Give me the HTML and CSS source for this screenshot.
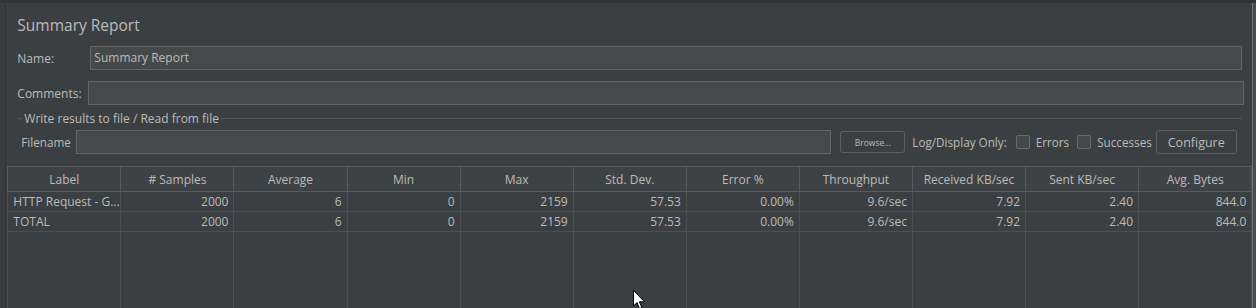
FILE: index.html
```html
<!DOCTYPE html>
<html lang="en">
<head>
    <meta charset="UTF-8">
    <title>Summary Report</title>
    <link rel="stylesheet" href="styles.css">
</head>
<body>
    <div class="frame">
        <div class="gutter"></div>

        <div class="panel">
            <h1 class="title">Summary Report</h1>

            <div class="field name-field">
                <span class="field-label">Name:</span>
                <div class="text-box">Summary Report</div>
            </div>

            <div class="field comments-field">
                <span class="field-label">Comments:</span>
                <div class="text-box"></div>
            </div>

            <div class="file-box">
                <div class="file-title">
                    <span class="dash"></span>
                    <span class="file-title-text">Write results to file / Read from file</span>
                    <span class="rule"></span>
                </div>
                <div class="file-row">
                    <span class="field-label">Filename</span>
                    <div class="text-box filename"></div>
                    <button class="btn small">Browse...</button>
                    <span class="log-label">Log/Display Only:</span>
                    <label class="check"><span class="box"></span>Errors</label>
                    <label class="check"><span class="box"></span>Successes</label>
                    <button class="btn wide">Configure</button>
                </div>
            </div>

            <table class="results">
                <thead>
                    <tr>
                        <th>Label</th>
                        <th># Samples</th>
                        <th>Average</th>
                        <th>Min</th>
                        <th>Max</th>
                        <th>Std. Dev.</th>
                        <th>Error %</th>
                        <th>Throughput</th>
                        <th>Received KB/sec</th>
                        <th>Sent KB/sec</th>
                        <th>Avg. Bytes</th>
                    </tr>
                </thead>
                <tbody>
                    <tr>
                        <td class="name">HTTP Request - G...</td>
                        <td>2000</td><td>6</td><td>0</td><td>2159</td><td>57.53</td>
                        <td>0.00%</td><td>9.6/sec</td><td>7.92</td><td>2.40</td><td>844.0</td>
                    </tr>
                    <tr>
                        <td class="name">TOTAL</td>
                        <td>2000</td><td>6</td><td>0</td><td>2159</td><td>57.53</td>
                        <td>0.00%</td><td>9.6/sec</td><td>7.92</td><td>2.40</td><td>844.0</td>
                    </tr>
                    <tr class="filler">
                        <td></td><td></td><td></td><td></td><td></td><td></td>
                        <td></td><td></td><td></td><td></td><td></td>
                    </tr>
                </tbody>
            </table>
        </div>

        <div class="scroll-edge"></div>
    </div>

    <!-- mouse pointer over the table -->
    <svg class="pointer" width="13" height="20" viewBox="0 0 13 20">
        <path d="M0.5 0.5 L0.5 16 L4 12.5 L6.5 18.5 L8.8 17.5 L6.4 11.8 L11.5 11.8 Z" fill="#ffffff" stroke="#000000" stroke-width="1"/>
    </svg>
</body>
</html>
```

FILE: styles.css
```css
body { margin: 0; background: #3c3f41; font-family: "Open Sans", "Noto Sans", sans-serif; font-size: 12px; color: #bbbbbb; overflow: hidden; }
.frame { display: flex; height: 308px; border-top: 3px solid #313335; box-sizing: border-box; }
.gutter { width: 6px; background: #3a3d3f; border-right: 1px solid #2f3133; }
.panel { flex: 1; padding-left: 1px; }
.scroll-edge { width: 3px; background: #4a4d4f; border-left: 1px solid #6e7173; }

.title { margin: 0; padding: 11px 0 0 10px; height: 32px; font-size: 15.5px; font-weight: normal; line-height: 22px; color: #bbbbbb; }

.field { display: flex; align-items: center; height: 24px; padding-left: 10px; }
.comments-field { margin-top: 11px; }
.name-field .field-label { width: 73px; }
.comments-field .field-label { width: 71px; }
.name-field .text-box { width: 1152px; }
.comments-field .text-box { width: 1156px; }

.text-box { height: 24px; box-sizing: border-box; border: 1px solid #646464; background: #45494a; padding: 0 3px; line-height: 21px; }

.file-box { margin-top: 5px; padding-left: 12px; padding-right: 10px; }
.file-title { display: flex; align-items: center; height: 16px; white-space: nowrap; }
.dash { width: 3px; border-top: 1px solid #5b5e60; }
.file-title-text { padding: 0 2px; }
.rule { flex: 1; border-top: 1px solid #55585a; }

.file-row { display: flex; align-items: center; height: 24px; margin-top: 4px; padding-left: 2px; white-space: nowrap; font-size: 11.7px; }
.file-row .field-label { width: 55px; }
.filename { width: 755px; }

.btn { height: 22px; box-sizing: border-box; border: 1px solid #5e6060; border-radius: 3px; background: #3c3f41; color: #bbbbbb; font-family: inherit; font-size: 12px; padding: 0; }
.btn.small { width: 65px; margin-left: 9px; font-size: 8.5px; }
.btn.wide { width: 81px; height: 24px; margin-left: 4px; font-size: 12.5px; }
.log-label { margin-left: 7px; }
.check { display: flex; align-items: center; margin-left: 9px; }
.check .box { width: 12px; height: 12px; border: 1px solid #6b6b6b; border-radius: 2px; background: #43494a; margin-right: 6px; }
.check + .check { margin-left: 8px; }

.results { margin-top: 12px; border-collapse: collapse; table-layout: fixed; width: 1245px; }
.results th { height: 24px; padding: 0; background: #3f4244; border: 1px solid #585b5d; font-weight: normal; text-align: center; }
.results td { height: 19px; padding: 0 5px; border: 1px solid #4c4f51; text-align: right; white-space: nowrap; overflow: hidden; }
.results td.name { text-align: left; padding-left: 5px; }
.results tr.filler td { height: 80px; border-bottom: none; }

.pointer { position: absolute; left: 633px; top: 290px; }
```
